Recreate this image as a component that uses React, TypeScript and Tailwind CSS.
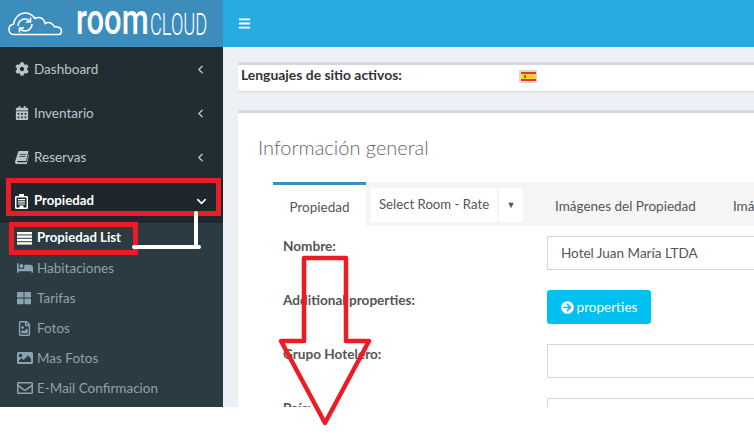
import { FaCog, FaCalendarAlt, FaBed, FaThLarge, FaRegFileImage, FaImage, FaRegEnvelope, FaArrowCircleRight, FaBars } from 'react-icons/fa';
import { ChevronLeft, ChevronDown } from 'lucide-react';

function PropIcon() {
  return (
    <svg width="13" height="15" viewBox="0 0 13 15" fill="#fff">
      <path d="M4 0h5v2h3a1 1 0 0 1 1 1v11a1 1 0 0 1-1 1H1a1 1 0 0 1-1-1V3a1 1 0 0 1 1-1h3zM1.500 3.500v10h3v-2h4v2h3v-10zM3 5h7v1.200H3zM3 7.200h7v1.200H3zM3 9.400h7v1H3z" fillRule="evenodd" />
    </svg>
  );
}

function ListIcon() {
  return (
    <svg width="15" height="13" viewBox="0 0 15 13" fill="#fff">
      <rect x="0" y="0" width="15" height="2.400" />
      <rect x="0" y="3.400" width="15" height="2.400" />
      <rect x="0" y="6.800" width="15" height="2.400" />
      <rect x="0" y="10.200" width="15" height="2.400" />
    </svg>
  );
}

function BookIcon() {
  return (
    <svg width="14" height="13" viewBox="0 0 14 13" fill="currentColor">
      <path d="M3.500 0H13.500L11 10H2.800C2 10 1.800 11.200 2.600 11.200H11.500L13.500 3.500 14 4 11.800 13H2C.5 13-.3 11.500.2 10z" />
      <path d="M5 3h6v.8H4.800zM4.400 5h6v.8H4.200z" fill="#222d32" />
    </svg>
  );
}

function CloudLogo() {
  return (
    <svg width="56" height="24" viewBox="0 0 56 24" fill="none" stroke="#fff" strokeWidth="1.600" strokeLinejoin="round">
      <path d="M6 22.500C2.500 22.500 1 20 1 17.500c0-3 2-5 4.500-5.200C6.500 6 11 1 17 1c4.500 0 8 2.500 10 5.500 2-1.500 6-1.500 8 .8 1.500 1.600 2 3 2 4.500 2-1.500 5-1.500 7 0 1.500 1 2 2 2.500 3 3-.5 7 1 7 4.500 0 2-1 3.200-3 3.200z" />
      <path d="M10 14c0-4 3-7 7-7 2 0 3.500.8 4.500 2M24 12c0 4-3 7-7 7-2 0-3.500-.8-4.500-2" />
      <path d="M22.500 5.500v4.500h-4.500M11.500 20.500V16H16" />
    </svg>
  );
}

function Flag() {
  return (
    <div className="ml-[113px] flex h-[13px] w-[18px] items-center justify-center bg-[#d8d8d8]">
      <div className="flex h-[9px] w-[15px] flex-col">
        <div className="h-[2px] bg-[#e8342a]" />
        <div className="flex h-[5px] items-center bg-[#f7d038] pl-[3px]">
          <div className="h-[3px] w-[2px] bg-[#c8552c]" />
        </div>
        <div className="h-[2px] bg-[#e8342a]" />
      </div>
    </div>
  );
}

const top = [
  { label: 'Dashboard', icon: <FaCog size={14} /> },
  { label: 'Inventario', icon: <FaCalendarAlt size={14} /> },
  { label: 'Reservas', icon: <BookIcon /> },
];

const sub = [
  { label: 'Habitaciones', icon: <FaBed size={16} /> },
  { label: 'Tarifas', icon: <FaThLarge size={14} /> },
  { label: 'Fotos', icon: <FaRegFileImage size={15} /> },
  { label: 'Mas Fotos', icon: <FaImage size={16} /> },
  { label: 'E-Mail Confirmacion', icon: <FaRegEnvelope size={16} /> },
];

function Sidebar() {
  return (
    <div className="flex w-[223px] shrink-0 flex-col bg-[#222d32] text-[13.5px]">
      {top.map((t) => (
        <div key={t.label} className="flex h-[44px] shrink-0 items-center pl-[15px] pr-[16px] text-[#b8c7ce]">
          <span className="flex w-[19px] justify-start">{t.icon}</span>
          <span>{t.label}</span>
          <ChevronLeft size={13} strokeWidth={2.5} className="ml-auto" />
        </div>
      ))}
      <div className="flex h-[44px] shrink-0 items-center bg-[#1e282c] pl-[15px] pr-[14px] text-[13.2px] font-bold text-white">
        <span className="flex w-[19px] justify-start"><PropIcon /></span>
        <span>Propiedad</span>
        <ChevronDown size={15} strokeWidth={2.5} className="ml-auto" />
      </div>
      <div className="flex-1 bg-[#2c3b41]">
        <div className="flex h-[30px] items-center pl-[17px] text-[13.2px] font-bold text-white">
          <span className="flex w-[20px]"><ListIcon /></span>
          <span>Propiedad List</span>
        </div>
        {sub.map((s) => (
          <div key={s.label} className="flex h-[30px] items-center pl-[17px] text-[#8aa4af]">
            <span className="flex w-[20px]">{s.icon}</span>
            <span>{s.label}</span>
          </div>
        ))}
      </div>
    </div>
  );
}

function Field({ label, children }: { label: string; children: React.ReactNode }) {
  return (
    <div className="flex">
      <div className="w-[274px] shrink-0 pl-[10px] pt-[1px] text-[13.6px] font-bold leading-[18px] text-[#555]">{label}</div>
      {children}
    </div>
  );
}

export default function App() {
  return (
    <div className="relative h-[444px] w-[754px] overflow-hidden bg-white font-['Lato',sans-serif]">
      <div className="h-[407px] overflow-hidden">
        <div className="flex h-[47px]">
          <div className="flex w-[223px] shrink-0 items-center overflow-hidden bg-[#3c8dbc] pl-[8px] text-white">
            <CloudLogo />
            <span className="ml-[12px] mt-[-9px] w-[74px] shrink-0 origin-left scale-x-[0.72] whitespace-nowrap font-['Roboto',sans-serif] text-[43px] font-medium leading-none">room</span>
            <span className="w-[58px] shrink-0 origin-left scale-x-[0.57] whitespace-nowrap font-['Roboto',sans-serif] text-[32px] font-light leading-none">CLOUD</span>
          </div>
          <div className="flex flex-1 items-center bg-[#27ace2] pl-[15px] text-white">
            <FaBars size={13} />
          </div>
        </div>
        <div className="flex h-[360px]">
          <Sidebar />
          <div className="flex-1 overflow-hidden bg-[#ecf0f5] pl-[15px] pt-[15px]">
            <div className="flex h-[29px] w-[560px] items-start rounded-[3px] border-t-[3px] border-[#d2d6de] bg-white pl-[3px] shadow-[0_1px_1px_rgba(0,0,0,0.1)]">
              <span className="w-[165px] whitespace-nowrap text-[13.9px] font-bold leading-[20px] text-[#333]">Lenguajes de sitio activos:</span>
              <div className="pt-[5px]"><Flag /></div>
            </div>
            <div className="mt-[19px] h-[400px] w-[560px] rounded-[3px] border-t-[3px] border-[#d2d6de] bg-white pl-[20px] pt-[20px]">
              <h3 className="text-[20px] font-light leading-[28px] text-[#666]">Información general</h3>
              <div className="ml-[15px] mt-[21px]">
                <div className="flex h-[44px] bg-[#f5f5f5] text-[13.5px] text-[#555]">
                  <div className="flex w-[93px] items-center justify-center border-t-[3px] border-[#3c8dbc] bg-white pt-[4px]">Propiedad</div>
                  <div className="ml-[5px] mt-[6px] flex h-[34px] w-[126px] items-center bg-white pl-[8px] text-[13.2px]">Select Room - Rate</div>
                  <div className="ml-[2px] mt-[6px] flex h-[34px] w-[24px] items-center justify-center bg-white text-[9px]">▼</div>
                  <div className="ml-[32px] flex items-center whitespace-nowrap pt-[4px]">Imágenes del Propiedad</div>
                  <div className="ml-[37px] flex items-center whitespace-nowrap pt-[4px]">Imágenes</div>
                </div>
                <div className="flex flex-col gap-[20px] pt-[10px]">
                  <Field label="Nombre:">
                    <div className="flex h-[34px] flex-1 items-center border border-[#d2d6de] pl-[13px] text-[13.5px] text-[#555]">Hotel Juan María LTDA</div>
                  </Field>
                  <Field label="Additional properties:">
                    <button className="flex h-[34px] w-[104px] items-center justify-center gap-[3px] rounded-[3px] bg-[#00c0ef] text-[13.5px] text-white">
                      <FaArrowCircleRight size={13} />
                      properties
                    </button>
                  </Field>
                  <Field label="Grupo Hotelero:">
                    <div className="h-[34px] flex-1 border border-[#d2d6de]" />
                  </Field>
                  <Field label="País:">
                    <div className="h-[34px] flex-1 border border-[#d2d6de]" />
                  </Field>
                </div>
              </div>
            </div>
          </div>
        </div>
      </div>

      {/* anotaciones encima de la captura */}
      <div className="absolute left-[6px] top-[178px] h-[38px] w-[215px] border-[5px] border-[#ed1c24]" />
      <div className="absolute left-[9px] top-[222px] h-[33px] w-[129px] border-[5px] border-[#ed1c24]" />
      <svg className="absolute left-0 top-0" width="754" height="444" fill="none">
        <path d="M196 213V247H134M199 247H196" stroke="#fff" strokeWidth="4" strokeLinecap="round" strokeLinejoin="round" />
        <path d="M304 258H346V341H369L325 423L281 341H304Z" stroke="#ed1c24" strokeWidth="4.500" strokeLinejoin="round" />
      </svg>
    </div>
  );
}
